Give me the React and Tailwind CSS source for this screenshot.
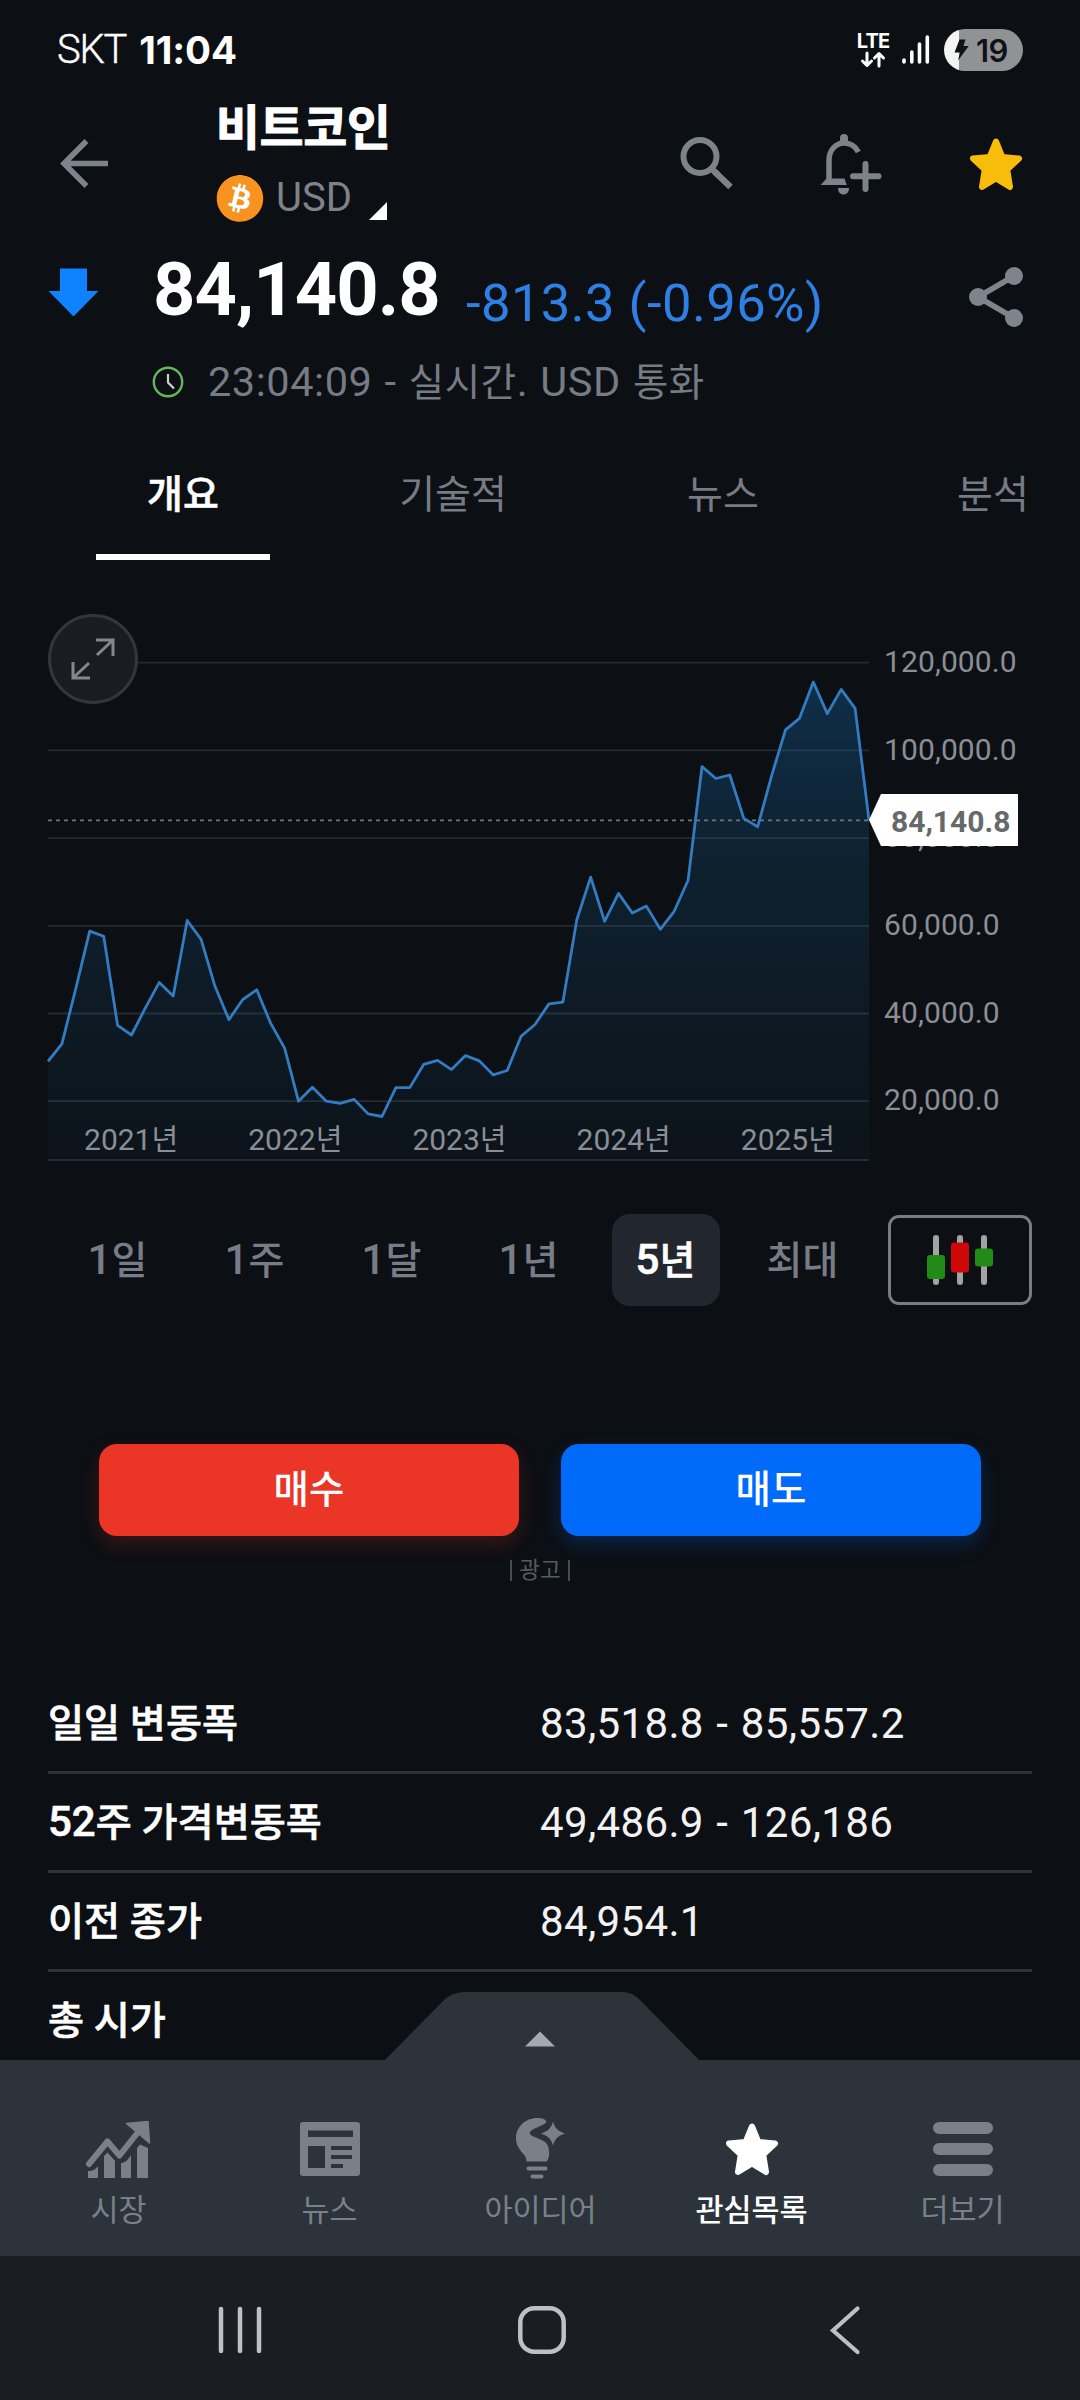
import { FaBitcoin } from "react-icons/fa";

// Monthly closes, thousands of USD
const PRICES = [
  29.1, 33.1, 45.7, 58.8, 57.6, 37.3, 35.1, 41.3, 47.1, 44.0, 61.2, 56.9, 46.2, 38.6, 43.2, 45.4, 37.8, 32.1, 20.0, 23.2,
  20.0, 19.5, 20.4, 17.1, 16.5, 23.1, 23.1, 28.4, 29.3, 27.2, 30.4, 29.2, 26.0, 27.0, 34.8, 37.5, 42.2, 42.6, 61.4, 71.1,
  61.0, 67.4, 62.9, 64.5, 59.2, 63.3, 70.4, 96.3, 93.6, 94.4, 84.5, 82.6, 94.2, 104.7, 107.3, 115.6, 108.4, 113.9, 109.6, 84.1,
];
const CHART_W = 821;
const CHART_H = 544;
const yOf = (v) => 483.2 - (v - 20) * 4.385;
const LINE = PRICES.map((v, i) => `${((i * CHART_W) / (PRICES.length - 1)).toFixed(1)},${yOf(v).toFixed(1)}`).join(" ");

const AXIS = ["120,000.0", "100,000.0", "80,000.0", "60,000.0", "40,000.0", "20,000.0"];
const YEARS = ["2021", "2022", "2023", "2024", "2025"];

function Star({ className }) {
  return (
    <svg width="54" height="53" viewBox="0 0 54 53" className={className} fill="currentColor" stroke="currentColor" strokeWidth="6" strokeLinejoin="round">
      <polygon points="27,3.5 20.7,19 4,20.5 15.8,31.5 13,49 27,40.5 41,49 38.2,31.5 50,20.5 33.3,19" />
    </svg>
  );
}

function StatusBar() {
  return (
    <div className="flex h-[100px] items-center pl-[57px] pr-[57px] text-white">
      <span className="text-[40px] font-light leading-none tracking-[-1.2px] [-webkit-text-stroke:0.400px_#fff]">SKT</span>
      <span className="ml-[13px] font-['Inter'] text-[38.500px] font-bold leading-none tracking-[-0.100px]">11:04</span>
      <div className="ml-auto flex items-center">
        <div className="flex w-[34px] flex-col items-center">
          <span className="mt-[1px] font-['Inter'] text-[20px] font-bold leading-[16px] tracking-[-0.8px]">LTE</span>
          <svg width="26" height="17" viewBox="0 0 26 17" className="mt-[2px]" fill="none" stroke="currentColor" strokeWidth="3" strokeLinecap="round" strokeLinejoin="round">
            <path d="M7 2v12M2.5 10 7 14.5 11.500 10M19 15V3M14.500 7 19 2.500 23.500 7" />
          </svg>
        </div>
        <svg width="28" height="30" viewBox="0 0 28 30" className="ml-[12px]" stroke="currentColor" strokeWidth="3.600" strokeLinecap="round">
          <path d="M2 25v2M9.800 17v10M17.500 9v18M25.300 2v25" />
        </svg>
        <div className="ml-[14px] flex h-[42px] w-[79px] items-center overflow-hidden rounded-full bg-[linear-gradient(to_right,#f4f4f4_15px,#919294_15px)] pl-[10px] text-[#101216]">
          <svg width="15" height="22" viewBox="0 0 15 22" fill="currentColor">
            <path d="M5.500 0.500h6L9.500 7h5.300L4 21.500l2-8H0.500z" />
          </svg>
          <span className="ml-[7px] font-['Inter'] text-[31px] font-semibold leading-none tracking-[-0.500px]">19</span>
        </div>
      </div>
    </div>
  );
}

function Header() {
  return (
    <div className="flex h-[148px] pl-[60px] pr-[57px] text-[#7d828b]">
      <svg width="49" height="50" viewBox="0 0 49 50" className="mt-[38px]" fill="none" stroke="currentColor" strokeWidth="5.600">
        <path d="M48 25.500H4M26.500 3 4 25.500 26.500 48" />
      </svg>
      <div className="ml-[107px] mt-[5px]">
        <div className="h-[50px] whitespace-nowrap text-[47.500px] font-bold leading-[48px] text-white [-webkit-text-stroke:1.200px_#fff]">비트코인</div>
        <div className="mt-[19px] flex h-[48px] items-center">
          <span className="flex size-[48px] items-center justify-center rounded-full bg-[radial-gradient(#fff_66%,transparent_67%)] text-[#f7931e]">
            <FaBitcoin size={49} />
          </span>
          <span className="ml-[12px] w-[78px] text-[40px] leading-none">USD</span>
          <svg width="18" height="18" viewBox="0 0 18 18" className="ml-[15px] mt-[25px]" fill="#fff">
            <path d="M18 0v18H0z" />
          </svg>
        </div>
      </div>
      <svg width="54" height="54" viewBox="0 0 54 54" className="ml-auto mt-[36px]" fill="none" stroke="currentColor">
        <circle cx="20" cy="20.500" r="16.500" strokeWidth="6" />
        <path d="M35.500 36.500 50.500 51" strokeWidth="6.500" />
        <path d="M34.500 35.500 37 38" strokeWidth="6.500" strokeLinecap="round" />
      </svg>
      <svg width="62" height="61" viewBox="0 0 62 61" className="ml-[86px] mt-[34px]" fill="none" stroke="currentColor">
        <path d="M20 8V4a4 4 0 0 1 8 0v4z" fill="currentColor" strokeWidth="0" />
        <path d="M9 49V26C9 16 16 9 24 9c6 0 11.500 3.500 14.300 9" strokeWidth="5.500" />
        <path d="M6.500 44.500H24.500L26.800 51H0.500z" fill="currentColor" strokeWidth="0" />
        <path d="M18 54h11c0 4-2 6.500-5.500 6.500S18 58 18 54z" fill="currentColor" strokeWidth="0" />
        <path d="M45.500 30v25M33 42.300h25.500" strokeWidth="6" strokeLinecap="round" />
      </svg>
      <Star className="ml-[87px] mt-[38px] text-[#f8bd0b]" />
    </div>
  );
}

function Quote() {
  return (
    <div className="h-[170px]">
      <div className="flex h-[80px] pl-[48px] pr-[57px]">
        <svg width="51" height="49" viewBox="0 0 51 49" className="mt-[20px]" fill="#0f82ff">
          <path d="M12 0.500h27V23h11.500L25.500 48.500 0.500 23H12z" />
        </svg>
        <span className="ml-[54px] mt-[5px] w-[289px] text-[74px] font-bold leading-[74px] tracking-[-0.950px] text-white">84,140.8</span>
        <span className="ml-[24px] mt-[29px] whitespace-nowrap text-[52.500px] leading-[52px] tracking-[0.450px] text-[#2f80e4]">-813.3 (-0.96%)</span>
        <svg width="54" height="62" viewBox="0 0 54 62" className="ml-auto mt-[18px] text-[#7f848c]" fill="currentColor">
          <circle cx="45" cy="10" r="9" />
          <circle cx="9" cy="31" r="9" />
          <circle cx="45" cy="52" r="9" />
          <path d="M45 10 9 31 45 52" fill="none" stroke="currentColor" strokeWidth="5.500" />
        </svg>
      </div>
      <div className="mt-[31px] flex h-[46px] items-center pl-[152px] text-[41.500px] leading-none text-[#767b84]">
        <svg width="32" height="32" viewBox="0 0 32 32" fill="none">
          <circle cx="16" cy="16" r="14.200" stroke="#62b85a" strokeWidth="2.400" />
          <path d="M16 8v8.500l6 6" stroke="#c9d3c9" strokeWidth="2.200" />
        </svg>
        <span className="ml-[24px] whitespace-nowrap tracking-[0.550px] [word-spacing:1.300px]">
          23:04:09 - <span className="text-[38.500px]">실시간</span>. USD <span className="text-[38.500px]">통화</span>
        </span>
      </div>
    </div>
  );
}

function Tabs() {
  return (
    <div className="flex h-[142px] overflow-hidden pl-[48px] text-[39px] leading-[38px] text-[#767b84]">
      {["개요", "기술적", "뉴스", "분석"].map((t, i) => (
        <div key={t} className="flex w-[270px] shrink-0 flex-col items-center pt-[58px]">
          <span className={i === 0 ? "font-medium text-white [-webkit-text-stroke:0.600px_#fff]" : ""}>{t}</span>
          {i === 0 && <span className="mt-[40px] h-[6px] w-[174px] bg-white" />}
        </div>
      ))}
    </div>
  );
}

function Chart() {
  return (
    <div className="relative mt-[58px] flex h-[544px] pl-[48px]">
      <svg width={CHART_W} height={CHART_H} viewBox={`0 0 ${CHART_W} ${CHART_H}`} className="shrink-0 overflow-visible">
        <defs>
          <linearGradient id="area" gradientUnits="userSpaceOnUse" x1="0" y1="64" x2="0" y2="544">
            <stop offset="0" stopColor="#1670b8" stopOpacity="0.320" />
            <stop offset="0.400" stopColor="#1670a8" stopOpacity="0.180" />
            <stop offset="1" stopColor="#1670a0" stopOpacity="0.040" />
          </linearGradient>
        </defs>
        {[120, 100, 80, 60, 40, 20].map((v) => (
          <line key={v} x1="0" x2={CHART_W} y1={yOf(v)} y2={yOf(v)} stroke="#252b32" strokeWidth="1.800" />
        ))}
        <line x1="0" x2={CHART_W} y1="542" y2="542" stroke="#252a31" strokeWidth="2" />
        <polygon points={`0,542 ${LINE} ${CHART_W},542`} fill="url(#area)" />
        <line x1="0" x2={CHART_W} y1="202.300" y2="202.300" stroke="#6f757d" strokeWidth="1.800" strokeDasharray="4 4" />
        <polyline points={LINE} fill="none" stroke="#337cc2" strokeWidth="2.800" strokeLinejoin="round" />
      </svg>
      <div className="ml-[15px] flex flex-col text-[30px] leading-none tracking-[0.100px] text-[#8b8e94]">
        {AXIS.map((a) => (
          <div key={a} className="flex h-[87.700px] items-center">{a}</div>
        ))}
      </div>
      <div className="absolute left-[49px] top-[507px] flex text-[30px] leading-none text-[#8b8e94]">
        {YEARS.map((y) => (
          <span key={y} className="w-[164.200px] text-center">
            {y}<span className="text-[29px]">년</span>
          </span>
        ))}
      </div>
      <div className="absolute left-[48px] top-[-4px] flex size-[90px] items-center justify-center rounded-full border-[3px] border-[#33363c] bg-[#1a1c22]">
        <svg width="44" height="44" viewBox="0 0 44 44" fill="none" stroke="#84878c" strokeWidth="3">
          <path d="M25 3h17v16M42 3 26 18M2 25v16h17M2 41 18 26" />
        </svg>
      </div>
      <div className="absolute left-[869px] top-[176px] flex h-[52px] w-[149px] items-center bg-white pl-[22px] text-[30px] font-bold leading-none text-[#66696b] [clip-path:polygon(0_50%,12px_0,100%_0,100%_100%,12px_100%)]">
        <span className="mt-[4px]">84,140.8</span>
      </div>
    </div>
  );
}

function Ranges() {
  const items = [["1", "일"], ["1", "주"], ["1", "달"], ["1", "년"], ["5", "년"], ["", "최대"]];
  return (
    <div className="mt-[52px] flex h-[92px] items-center pl-[49px]">
      {items.map(([n, u], i) => (
        <div key={n + u} className="flex w-[137px] shrink-0 justify-center">
          <span
            className={
              i === 4
                ? "flex h-[92px] w-[108px] items-center justify-center rounded-[18px] bg-[#22262e] text-[42px] font-medium leading-none text-white [-webkit-text-stroke:0.600px_#fff]"
                : "flex h-[92px] items-center text-[42px] font-medium leading-none text-[#787c86]"
            }
          >
            <span>
              {n}<span className="text-[39px]">{u}</span>
            </span>
          </span>
        </div>
      ))}
      <div className="ml-[17px] flex h-[90px] w-[144px] items-center justify-center rounded-[11px] border-[3px] border-[#787c86]">
        <svg width="68" height="50" viewBox="0 0 68 50">
          <path d="M10 3v44M34 3v44M58 3v44" stroke="#a3a3a3" strokeWidth="6" strokeLinecap="round" />
          <rect x="1" y="20" width="18" height="24" rx="3" fill="#228b17" />
          <rect x="25" y="7.500" width="18" height="30" rx="3" fill="#cc0808" />
          <rect x="49" y="13.500" width="18" height="18" rx="3" fill="#228b17" />
        </svg>
      </div>
    </div>
  );
}

function Trade() {
  return (
    <>
      <div className="mt-[138px] flex h-[92px] gap-[42px] px-[99px] text-[38.500px] font-medium leading-none text-white">
        <div className="flex flex-1 items-center justify-center rounded-[18px] bg-[#ea3527] shadow-[0_8px_20px_rgba(234,53,39,0.200)]">매수</div>
        <div className="flex flex-1 items-center justify-center rounded-[18px] bg-[#006bfa] shadow-[0_8px_20px_rgba(0,107,250,0.240)]">매도</div>
      </div>
      <div className="mt-[22px] flex h-[24px] items-center justify-center gap-[7px] text-[#555a63]">
        <span className="h-[21px] w-[2px] bg-[#474b53]" />
        <span className="text-[22.500px] leading-none">광고</span>
        <span className="h-[21px] w-[2px] bg-[#474b53]" />
      </div>
    </>
  );
}

function Stats() {
  const rows = [
    ["", "일일 변동폭", "83,518.8 - 85,557.2"],
    ["52", "주 가격변동폭", "49,486.9 - 126,186"],
    ["", "이전 종가", "84,954.1"],
    ["", "총 시가", ""],
  ];
  return (
    <div className="mx-[48px] mt-[93px]">
      {rows.map(([n, k, v]) => (
        <div key={k} className="flex h-[99px] items-center border-b-[3px] border-[#2f323b] text-[42px] leading-none text-white">
          <span className="mt-[1px] w-[492px] font-medium [-webkit-text-stroke:0.600px_#fff]">
            {n}<span className="text-[39.200px]">{k}</span>
          </span>
          <span className="mt-[1px] tracking-[0.350px] [word-spacing:1.800px] text-[#f2f2f3]">{v}</span>
        </div>
      ))}
    </div>
  );
}

const MarketIcon = () => (
  <svg width="66" height="57" viewBox="0 0 66 57" fill="currentColor">
    <path d="M4 43 22.500 20.500 34.500 34.500 54 10" fill="none" stroke="currentColor" strokeWidth="6" strokeLinecap="round" strokeLinejoin="round" />
    <path d="M41.500 2.500 63 0.500 64.500 22z" stroke="currentColor" strokeWidth="1.500" strokeLinejoin="round" />
    <path d="M3 50c5 0 8-2 10-5v12H3zM19 35l3.500-3.500L30 40v17H19zM36 42c4 0 7-3 10-8v23H36zM52 27l3-3.500 8 3.500v30H52z" />
  </svg>
);

const NewsIcon = () => (
  <svg width="60" height="54" viewBox="0 0 60 54">
    <path fillRule="evenodd" fill="currentColor" d="M3 0h54a3 3 0 0 1 3 3v48a3 3 0 0 1-3 3H3a3 3 0 0 1-3-3V3a3 3 0 0 1 3-3zM8 8.500v6.500h45V8.500zM8 24v22h17V24zM31 24v4h21v-4zM31 33v4h21v-4zM31 42v4h12v-4z" />
  </svg>
);

const IdeaIcon = () => (
  <svg width="50" height="62" viewBox="0 0 50 62" fill="currentColor">
    <path d="M21.500 0C27 0 31 2 30 4.500 29 7 14 11 13.700 15c0 4 10.800 5 16 9.500C33 28 33.500 33 33 38c-.5 2.500-1.500 4-2 5.500H10.500c0-4-1.500-6-4-8.500C3 31 0 26 0 20.500 0 9 9 0 21.500 0z" />
    <path d="M37 3.500c2 7 5 9.500 12 12-7 2.500-10 5-12 12-2-7-5-9.500-12-12 7-2.500 10-5 12-12z" />
    <path d="M12.500 50.500h17M16.500 58.500h9" stroke="currentColor" strokeWidth="4" strokeLinecap="round" />
  </svg>
);

const MoreIcon = () => (
  <svg width="60" height="54" viewBox="0 0 60 54" stroke="currentColor" strokeWidth="12" strokeLinecap="round">
    <path d="M6 6h48M6 27h48M6 48h48" />
  </svg>
);

function BottomNav() {
  const items = [
    ["시장", <MarketIcon key="i" />],
    ["뉴스", <NewsIcon key="i" />],
    ["아이디어", <IdeaIcon key="i" />],
    ["관심목록", <Star key="i" />],
    ["더보기", <MoreIcon key="i" />],
  ];
  return (
    <div className="relative flex h-[196px] shrink-0 justify-center bg-[#2c333b] pl-[1px]">
      <svg width="316" height="69" viewBox="0 0 316 69" className="absolute left-[384px] top-[-68px]">
        <path d="M0 69 58 10Q67 0 80 0H238Q249 0 257 9L316 69z" fill="#2c333b" />
        <path d="M141 54.500 156 39.500 171 54.500z" fill="#a5a9b1" />
      </svg>
      {items.map(([label, icon], i) => (
        <div key={label} className={i === 3 ? "flex w-[211px] flex-col items-center text-white" : "flex w-[211px] flex-col items-center text-[#7a8088]"}>
          <div className={i === 0 ? "mr-[2px] mt-[57px] flex h-[64px] items-center" : "mt-[57px] flex h-[64px] items-center"}>{icon}</div>
          <span className={i === 3 ? "mt-[13px] text-[30.500px] font-medium leading-[34px]" : "mt-[13px] text-[30.500px] leading-[34px]"}>{label}</span>
        </div>
      ))}
    </div>
  );
}

function SystemNav() {
  return (
    <div className="flex h-[144px] shrink-0 items-center bg-[#1b1d23] pt-[3px] text-[#bfc0c4]">
      <svg width="44" height="50" viewBox="0 0 44 50" className="ml-[218px]" stroke="currentColor" strokeWidth="4.500" strokeLinecap="round">
        <path d="M3 4v42M22 4v42M41 4v42" />
      </svg>
      <svg width="50" height="50" viewBox="0 0 50 50" className="ml-[255px]" fill="none" stroke="currentColor" strokeWidth="4.500">
        <rect x="3.300" y="3.300" width="43.400" height="43.400" rx="14" />
      </svg>
      <svg width="32" height="50" viewBox="0 0 32 50" className="ml-[262px]" fill="none" stroke="currentColor" strokeWidth="4.200" strokeLinecap="round" strokeLinejoin="miter">
        <path d="M28.500 3.500 4 25.500 28.500 47" />
      </svg>
    </div>
  );
}

export default function App() {
  return (
    <div className="flex h-[2400px] w-[1080px] flex-col overflow-hidden bg-[#0c0f14] font-['Roboto','Noto_Sans_CJK_KR',sans-serif]">
      <div className="h-[2060px] shrink-0 overflow-hidden">
        <StatusBar />
        <Header />
        <Quote />
        <Tabs />
        <Chart />
        <Ranges />
        <Trade />
        <Stats />
      </div>
      <BottomNav />
      <SystemNav />
    </div>
  );
}
